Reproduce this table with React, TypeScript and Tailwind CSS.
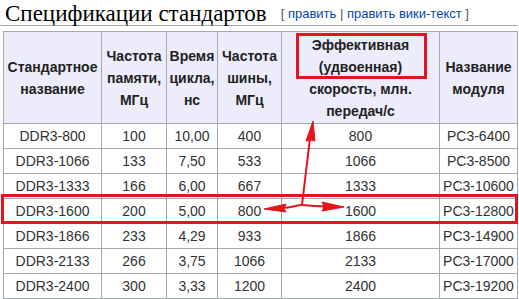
import React from 'react';

const rows = [
  ['DDR3-800', '100', '10,00', '400', '800', 'PC3-6400'],
  ['DDR3-1066', '133', '7,50', '533', '1066', 'PC3-8500'],
  ['DDR3-1333', '166', '6,00', '667', '1333', 'PC3-10600'],
  ['DDR3-1600', '200', '5,00', '800', '1600', 'PC3-12800'],
  ['DDR3-1866', '233', '4,29', '933', '1866', 'PC3-14900'],
  ['DDR3-2133', '266', '3,75', '1066', '2133', 'PC3-17000'],
  ['DDR3-2400', '300', '3,33', '1200', '2400', 'PC3-19200'],
];

const headers = [
  ['Стандартное', 'название'],
  ['Частота', 'памяти,', 'МГц'],
  ['Время', 'цикла,', 'нс'],
  ['Частота', 'шины,', 'МГц'],
  ['Эффективная', '(удвоенная)', 'скорость, млн.', 'передач/с'],
  ['Название', 'модуля'],
];

export default function App() {
  return <div className="relative w-[519px] h-[299px] bg-white overflow-hidden font-['Liberation_Sans',Arial,sans-serif] text-[#222]">
      <div className="flex items-end h-[26px] border-b border-[#a2a9b1] w-[517px]">
        <h2 className="font-['Liberation_Serif','Times_New_Roman',serif] text-[23px] leading-[22px] pl-[5px] text-black">
          Спецификации стандартов
        </h2>
        <span className="text-[13px] leading-none ml-[14px] mb-[5px] text-[#54595d]">
          [ <span className="text-[#0645ad]">править</span> | <span className="text-[#0645ad]">править вики-текст</span> ]
        </span>
      </div>
      <table className="ml-[3px] mt-[5px] w-[514px] table-fixed border-collapse text-[14px]">
        <colgroup>
          <col className="w-[98px]" />
          <col className="w-[65px]" />
          <col className="w-[51px]" />
          <col className="w-[64px]" />
          <col className="w-[158px]" />
          <col className="w-[78px]" />
        </colgroup>
        <thead>
          <tr className="h-[92px]">
            {headers.map((h, i) => <th key={i} className="bg-[#ececfa] border border-[#a2a9b1] p-0 font-bold leading-[22px] text-center">
                {h.map((line, j) => <div key={j}>{line}</div>)}
              </th>)}
          </tr>
        </thead>
        <tbody>
          {rows.map(r => <tr key={r[0]} className="h-[25px]">
              {r.map((c, i) => <td key={i} className="border border-[#a2a9b1] p-0 text-center leading-[24px] whitespace-nowrap text-[#333]">
                  {c}
                </td>)}
            </tr>)}
        </tbody>
      </table>

      {/* red annotations */}
      <div className="absolute left-[296px] top-[33px] w-[131px] h-[46px] border-[3px] border-[#e3141b] pointer-events-none" />
      <div className="absolute left-[1px] top-[194px] w-[517px] h-[30px] border-[3px] border-[#e3141b] pointer-events-none" />
      <svg className="absolute left-0 top-0 pointer-events-none" width="519" height="299" viewBox="0 0 519 299">
        <g fill="#e3141b" stroke="#e3141b">
          <path d="M302 205 L310 138" strokeWidth="2" fill="none" />
          <path d="M313 121 L306 141 L311 140 L315 141 Z" strokeWidth="1" />
          <path d="M282 208 C292 208 296 205 302 205 C308 205 314 207 326 206" strokeWidth="2" fill="none" />
          <path d="M264 209 L286 204 L284 208.5 L286 212 Z" strokeWidth="1" />
          <path d="M344 207 L322 202 L324 206.5 L322 211 Z" strokeWidth="1" />
        </g>
      </svg>
    </div>;
}
